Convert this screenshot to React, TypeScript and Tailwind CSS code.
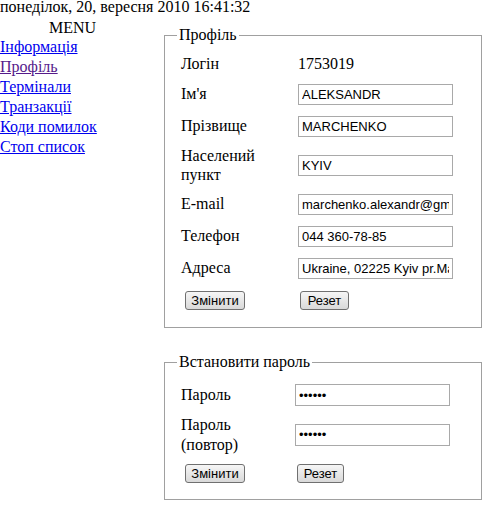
import React from 'react';

const inputCls =
  "h-[21px] w-[155px] border border-[#a9a9a9] bg-white px-[3px] font-['Liberation_Sans',Arial,sans-serif] text-[13px] text-black outline-none";
const btnCls =
  "h-[19px] rounded-[3px] border border-[#707070] bg-gradient-to-b from-[#f6f6f6] to-[#d9d9d9] font-['Liberation_Sans',Arial,sans-serif] text-[13px] leading-[17px] text-black";

const menu = [
  { label: 'Інформація', visited: false },
  { label: 'Профіль', visited: true },
  { label: 'Термінали', visited: false },
  { label: 'Транзакції', visited: false },
  { label: 'Коди помилок', visited: false },
  { label: 'Стоп список', visited: false },
];

const App = () => {
  return (
    <div className="min-h-screen bg-white font-['Liberation_Serif','Times_New_Roman',serif] text-[16px] text-black">
      <div className="h-[14px] whitespace-nowrap leading-[14px]">понеділок, 20, вересня 2010 16:41:32</div>

      <div className="flex pt-[5px]">
        {/* Menu */}
        <div className="w-[145px] shrink-0">
          <div className="text-center leading-[18px]">MENU</div>
          <nav className="flex flex-col leading-[20px]">
            {menu.map(item => (
              <a
                key={item.label}
                href="#"
                className={item.visited ? 'self-start text-[#551a8b] underline' : 'self-start text-[#0000ee] underline'}
              >
                {item.label}
              </a>
            ))}
          </nav>
        </div>

        {/* Forms */}
        <div className="ml-[19px] w-[318px] shrink-0 pt-[7px]">
          <fieldset className="border border-[#a0a0a0] px-[12px] pt-[6px] pb-[11px]">
            <legend className="px-[2px] leading-[18px]">Профіль</legend>
            <div className="grid grid-cols-[117px_1fr] pl-[4px]">
              <div className="flex h-[28px] items-center">Логін</div>
              <div className="flex h-[28px] items-center">1753019</div>

              <div className="flex h-[32px] items-center">Ім'я</div>
              <div className="flex h-[32px] items-center">
                <input className={inputCls} defaultValue="ALEKSANDR" />
              </div>

              <div className="flex h-[32px] items-center">Прізвище</div>
              <div className="flex h-[32px] items-center">
                <input className={inputCls} defaultValue="MARCHENKO" />
              </div>

              <div className="flex h-[46px] items-center leading-[19px]">
                Населений
                <br />
                пункт
              </div>
              <div className="flex h-[46px] items-center">
                <input className={inputCls} defaultValue="KYIV" />
              </div>

              <div className="flex h-[32px] items-center">E-mail</div>
              <div className="flex h-[32px] items-center">
                <input className={inputCls} defaultValue="marchenko.alexandr@gmail.com" />
              </div>

              <div className="flex h-[32px] items-center">Телефон</div>
              <div className="flex h-[32px] items-center">
                <input className={inputCls} defaultValue="044 360-78-85" />
              </div>

              <div className="flex h-[32px] items-center">Адреса</div>
              <div className="flex h-[32px] items-center">
                <input className={inputCls} defaultValue="Ukraine, 02225 Kyiv pr.Mayakovskogo" />
              </div>

              <div className="flex h-[32px] items-center">
                <button className={`${btnCls} ml-[4px] w-[60px]`}>Змінити</button>
              </div>
              <div className="flex h-[32px] items-center">
                <button className={`${btnCls} ml-[2px] w-[49px]`}>Резет</button>
              </div>
            </div>
          </fieldset>

          <fieldset className="mt-[25px] border border-[#a0a0a0] px-[12px] pt-[8px] pb-[11px]">
            <legend className="px-[2px] leading-[18px]">Встановити пароль</legend>
            <div className="grid grid-cols-[114px_1fr] pl-[4px]">
              <div className="flex h-[32px] items-center">Пароль</div>
              <div className="flex h-[32px] items-center">
                <input type="password" className={`${inputCls} h-[22px]`} defaultValue="123456" />
              </div>

              <div className="flex h-[47px] items-center leading-[20px]">
                Пароль
                <br />
                (повтор)
              </div>
              <div className="flex h-[47px] items-center">
                <input type="password" className={`${inputCls} h-[22px]`} defaultValue="123456" />
              </div>

              <div className="flex h-[30px] items-center">
                <button className={`${btnCls} ml-[4px] w-[60px]`}>Змінити</button>
              </div>
              <div className="flex h-[30px] items-center">
                <button className={`${btnCls} ml-[2px] w-[47px]`}>Резет</button>
              </div>
            </div>
          </fieldset>
        </div>
      </div>
    </div>
  );
};

export default App;
